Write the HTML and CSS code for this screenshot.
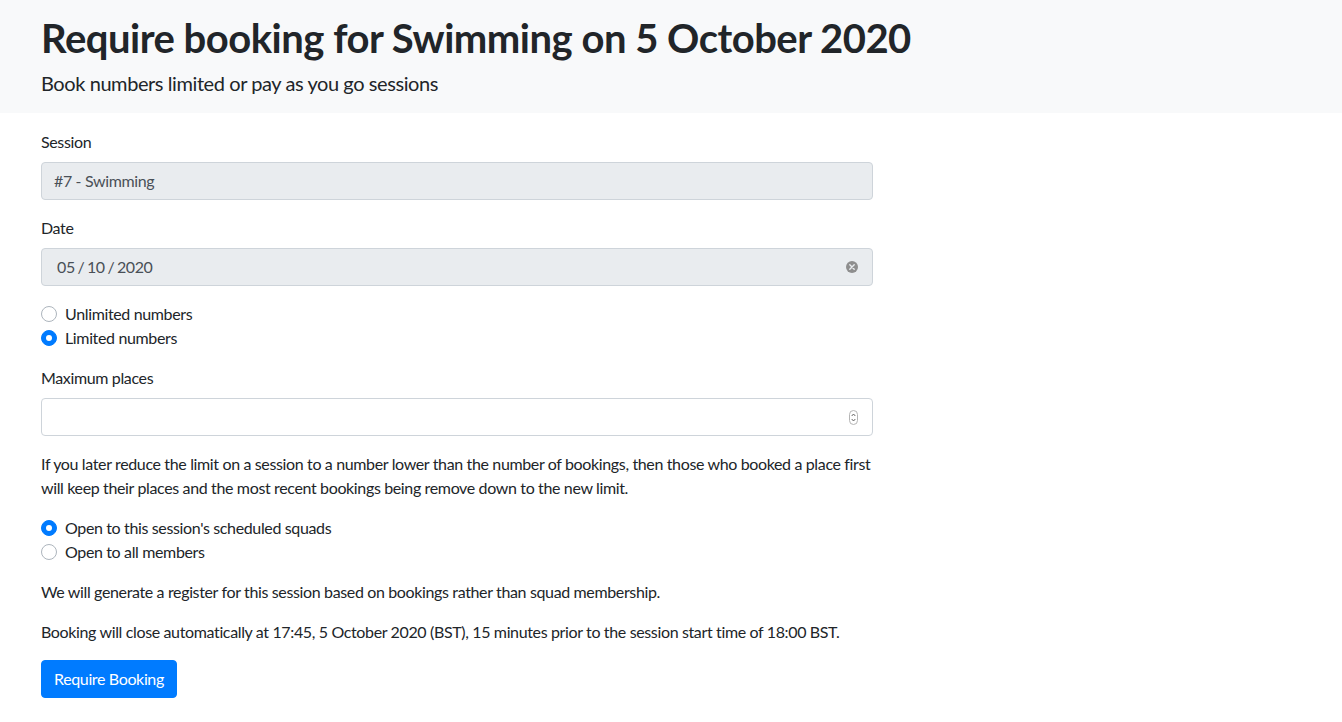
FILE: index.html
```html
<!DOCTYPE html>
<html lang="en">
<head>
<meta charset="utf-8">
<title>Require booking</title>
<link rel="stylesheet" href="styles.css">
</head>
<body>
<header class="hero">
  <h1 class="hero-title">Require booking for Swimming on 5 October 2020</h1>
  <p class="hero-lead">Book numbers limited or pay as you go sessions</p>
</header>
<main class="content">
  <form class="form">
    <div class="group">
      <label class="label">Session</label>
      <div class="control disabled">#7 - Swimming</div>
    </div>
    <div class="group">
      <label class="label">Date</label>
      <div class="control disabled date">
        <span class="date-text">05 / 10 / 2020</span>
        <svg class="clear-icon" width="12" height="12" viewBox="0 0 12 12"><circle cx="6" cy="6" r="6" fill="#8e8e8e"/><path d="M3.8 3.8l4.4 4.4M8.2 3.8l-4.4 4.4" stroke="#e9ecef" stroke-width="1.4" stroke-linecap="round"/></svg>
      </div>
    </div>
    <div class="group">
      <div class="radio"><span class="dot"></span><span>Unlimited numbers</span></div>
      <div class="radio"><span class="dot checked"></span><span>Limited numbers</span></div>
    </div>
    <div class="group">
      <label class="label">Maximum places</label>
      <div class="control number">
        <svg class="spin" width="9" height="15" viewBox="0 0 9 15"><rect x="0.5" y="0.5" width="8" height="14" rx="4" fill="#fff" stroke="#b5b5b5"/><path d="M2.7 6l1.8-2 1.8 2M2.7 9l1.8 2 1.8-2" fill="none" stroke="#555" stroke-width="0.9"/></svg>
      </div>
    </div>
    <p class="text">If you later reduce the limit on a session to a number lower than the number of bookings, then those who booked a place first will keep their places and the most recent bookings being remove down to the new limit.</p>
    <div class="group">
      <div class="radio"><span class="dot checked"></span><span>Open to this session's scheduled squads</span></div>
      <div class="radio"><span class="dot"></span><span>Open to all members</span></div>
    </div>
    <p class="text">We will generate a register for this session based on bookings rather than squad membership.</p>
    <p class="text">Booking will close automatically at 17:45, 5 October 2020 (BST), 15 minutes prior to the session start time of 18:00 BST.</p>
    <button type="button" class="btn">Require Booking</button>
  </form>
</main>
</body>
</html>
```
FILE: styles.css
```css
* { box-sizing: border-box; }
html, body { margin: 0; padding: 0; }
body {
  font-family: "Lato", "Liberation Sans", sans-serif;
  font-size: 16px;
  line-height: 24px;
  letter-spacing: -0.36px;
  color: #212529;
  background: #fff;
}
.hero {
  background: #f8f9fa;
  padding: 14px 41px 15px;
  margin-bottom: 17px;
}
.hero-title {
  margin: 0 0 6px;
  font-size: 40px;
  line-height: 48px;
  font-weight: 700;
  letter-spacing: -0.5px;
}
.hero-lead {
  margin: 0;
  font-size: 20px;
  line-height: 30px;
  letter-spacing: -0.42px;
}
.content { padding: 0 41px; }
.form { width: 832px; }
.group { margin-bottom: 16px; }
.label { display: block; margin-bottom: 8px; }
.control {
  height: 38px;
  border: 1px solid #ced4da;
  border-radius: 4px;
  padding: 6px 12px;
  background: #fff;
  display: flex;
  align-items: center;
  color: #495057;
}
.control.disabled { background: #e9ecef; }
.date { justify-content: space-between; padding-left: 15px; padding-right: 14px; }
.date-text { word-spacing: -1px; letter-spacing: -0.4px; }
.number { justify-content: flex-end; padding-right: 14px; }
.radio { display: flex; align-items: center; gap: 8px; height: 24px; }
.dot {
  width: 16px; height: 16px;
  border-radius: 50%;
  border: 1px solid #adb5bd;
  background: #fff;
  position: relative;
  flex: none;
}
.dot.checked { background: #007bff; border-color: #007bff; }
.dot.checked::after {
  content: "";
  position: absolute;
  left: 4px; top: 4px;
  width: 6px; height: 6px;
  border-radius: 50%;
  background: #fff;
}
.text { margin: 0 0 16px; }
.btn {
  font-family: inherit;
  font-size: 16px;
  line-height: 24px;
  letter-spacing: inherit;
  height: 38px;
  padding: 6px 12px;
  border: 1px solid #007bff;
  background: #007bff;
  color: #fff;
  border-radius: 4px;
}
```
